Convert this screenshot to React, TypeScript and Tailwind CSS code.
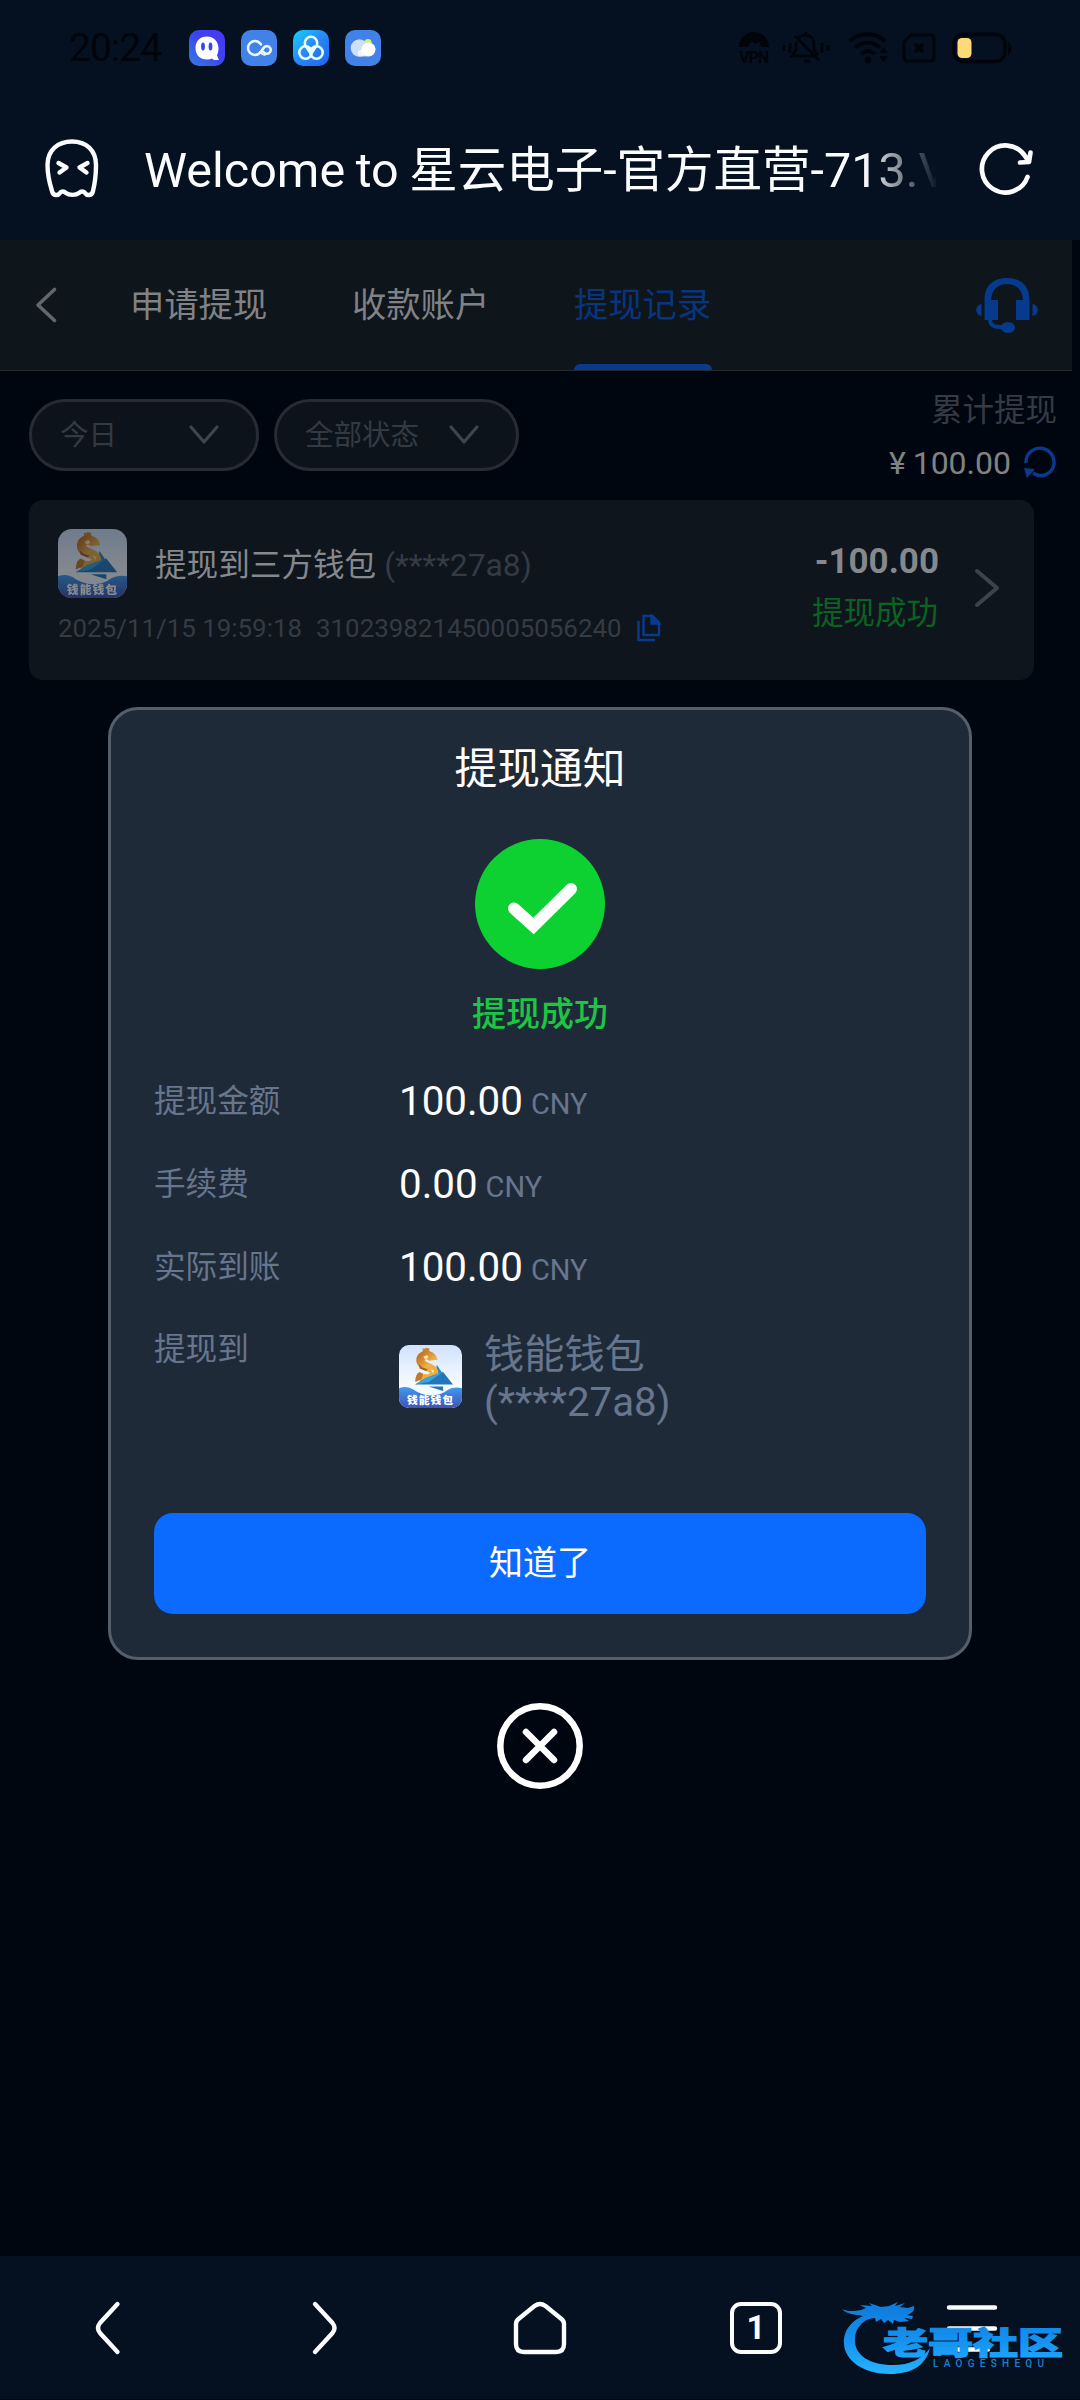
import type { ReactNode } from 'react'

interface DetailRow {
  label: string
  amount: string
}

const TABS = ['申请提现', '收款账户', '提现记录']

const ROWS: DetailRow[] = [
  { label: '提现金额', amount: '100.00' },
  { label: '手续费', amount: '0.00' },
  { label: '实际到账', amount: '100.00' },
]

function WalletLogo({ className }: { className: string }) {
  return (
    <svg viewBox="0 0 70 70" className={className}>
      <defs>
        <linearGradient id="sky" x1="0" y1="0" x2="0" y2="1">
          <stop offset="0" stopColor="#d0e2fc" />
          <stop offset="0.6" stopColor="#f6faff" />
        </linearGradient>
        <linearGradient id="sea" x1="0" y1="0" x2="0" y2="1">
          <stop offset="0" stopColor="#3f9cf0" />
          <stop offset="1" stopColor="#3f52b4" />
        </linearGradient>
        <linearGradient id="gold" gradientUnits="userSpaceOnUse" x1="19" y1="10" x2="46" y2="36">
          <stop offset="0" stopColor="#b9661c" />
          <stop offset="0.5" stopColor="#efb148" />
          <stop offset="1" stopColor="#e8a93c" />
        </linearGradient>
      </defs>
      <rect width="70" height="70" fill="url(#sky)" />
      <path d="M42 22l6 9-8 6z" fill="#2b86cc" />
      <path d="M26 4h3l1-1 4 1-1 5-6 1z" fill="#c78734" />
      <path d="M38 17C37 9 23 9 24 18c1 7 15 6 15 13 0 8-14 8-15 2" fill="none" stroke="url(#gold)" strokeWidth="9.500" />
      <path d="M18 41q0-9 5-11l4 2-2 6z" fill="#c4792b" />
      <path d="M27 13l4-2 2 3-4 2zM35 27l4 1-1 4z" fill="#fbe3a4" />
      <path d="M22 21l4 4 6 2-2 2-7-3z" fill="#a9601f" />
      <path d="M18 44l11-7 20-7 11 14z" fill="#2277bb" />
      <path d="M18 44l15-3 16-11-20 7z" fill="#3ba3dd" />
      <path d="M33 46h16v5z" fill="#2277bb" />
      <path d="M0 48q8-3 15 1 10 7 20 7 12 0 19-6 7-4 16-2v22H0z" fill="url(#sea)" />
      <text x="9" y="66" textLength="51" fill="#ffffff" className="text-[12px] font-black">
        钱能钱包
      </text>
    </svg>
  )
}

function AppBadge({ className, children }: { className: string; children: ReactNode }) {
  return (
    <div className={`size-9 overflow-hidden rounded-[10px] ${className}`}>
      <svg viewBox="0 0 36 36" className="size-9" fill="none">
        {children}
      </svg>
    </div>
  )
}

function StatusBar() {
  return (
    <div className="flex h-[96px] items-center pl-[69px] pr-[66px]">
      <span className="w-[120px] text-[39px] leading-[96px] tracking-[-1px] text-[#01040b]">20:24</span>
      <div className="flex gap-4">
        <AppBadge className="bg-linear-to-tr from-[#3a7be0] via-[#3b45f0] to-[#4a35f5]">
          <path d="M18 6.500c7 0 11.500 5 11.500 12 0 3-.6 5-1.600 6.800L30 30h-5l-2-1.500c-1.600.8-3.200 1-5 1-7 0-11.500-4.500-11.500-11.500S11 6.500 18 6.500z" fill="#fff" />
          <ellipse cx="14" cy="16.500" rx="1.900" ry="4" fill="#3b45e8" />
          <ellipse cx="21.500" cy="16.500" rx="1.900" ry="4" fill="#3b45e8" />
        </AppBadge>
        <AppBadge className="bg-[#4281e8]">
          <path d="M20 14.500c-1.500-2.300-3.500-3.500-6-3.500a7 7 0 0 0 0 14c4 0 6-3 7.500-5.500S24 16 26 16a3.900 3.900 0 1 1-3.500 6" stroke="#e9fbff" strokeWidth="2.500" strokeLinecap="round" />
          <path d="M19 21c1 2.500 3 4 5.500 4" stroke="#e9fbff" strokeWidth="2" />
        </AppBadge>
        <AppBadge className="bg-linear-to-br from-[#12cfff] via-[#2a86f5] to-[#1f63f0]">
          <g stroke="#eaffff" strokeWidth="2.600">
            <circle cx="18" cy="13" r="6.200" />
            <circle cx="12.500" cy="22.500" r="6.200" />
            <circle cx="23.500" cy="22.500" r="6.200" />
            <path d="M14 18l4 6 4-6" />
          </g>
        </AppBadge>
        <AppBadge className="bg-[#4281e8]">
          <circle cx="23" cy="12.500" r="3.600" fill="#d9f06a" />
          <circle cx="14.500" cy="18" r="8.800" fill="#cfdff8" />
          <circle cx="23.500" cy="19.500" r="7" fill="#fff" />
          <rect x="13" y="20" width="11" height="6.500" rx="3" fill="#fff" fillOpacity="0.700" />
        </AppBadge>
      </div>

      <svg viewBox="0 0 276 36" className="ml-auto h-9 w-[276px]" fill="none" stroke="#01040b">
        {/* vpn */}
        <path d="M2 17a14 14 0 0 1 28 0h-6l-3-5-4 2-3-3-5 6z" fill="#01040b" stroke="none" />
        <path d="M2 17a14 14 0 0 1 28 0" strokeWidth="2" />
        <text x="1" y="32.500" textLength="30" fill="#01040b" stroke="none" className="text-[16px] font-bold">
          VPN
        </text>
        {/* muted bell */}
        <g strokeWidth="2.800">
          <path d="M61 8c2-3 4-3 7-3 5 1 8 4 8 9v6l4 5M58 12v8l-4 6h22M57 6l24 24M66 31h6M68 2v3" />
          <path d="M52 13v10M46 15v6M84 13v10M90 15v6" />
        </g>
        {/* wifi */}
        <g strokeWidth="4">
          <path d="M112 11c10-9 25-9 35 0M117 17.500c8-6.500 17-6.500 25 0M123 24c5-4 9-4 14 0" />
        </g>
        <circle cx="130" cy="30" r="3.200" fill="#01040b" stroke="none" />
        <path d="M141 23l4.500-6 4.500 6zM141 26l4.500 6 4.500-6z" fill="#01040b" stroke="none" />
        {/* no sim */}
        <path d="M173 5h20a3 3 0 0 1 3 3v20a3 3 0 0 1-3 3h-24a3 3 0 0 1-3-3V12z" strokeWidth="3" />
        <path d="M177 14l8 8M185 14l-8 8" strokeWidth="3.400" />
        {/* battery */}
        <rect x="216" y="4.500" width="51" height="27" rx="9" strokeWidth="3.400" />
        <path d="M271 14q3 4 0 9z" fill="#01040b" strokeWidth="2" />
        <rect x="219.500" y="8" width="14" height="20" rx="4.500" fill="#ffd978" stroke="none" />
      </svg>
    </div>
  )
}

function BrowserBar() {
  return (
    <div className="flex h-[144px] items-center pl-[44px] pr-[46px]">
      <svg viewBox="0 0 56 60" className="h-[60px] w-14" fill="none" stroke="#fbfdff" strokeWidth="4.400" strokeLinecap="round" strokeLinejoin="round">
        <path d="M3.500 27C3.500 12 14 3.500 28 3.500S52 12 52 27c0 9-1 18-3 26-1 5-6 5-8 2-1-2-4-2-6 0-3 2.500-10 2.500-13 0-2-2-5-2-6 0-2 3-7 3-8-2-2.500-8-4.500-17-4.500-26z" />
        <path d="M14.500 25l8 4.500-7 5M43.500 25l-8 4.500 7 5" />
      </svg>
      <div className="ml-[44px] w-[792px] overflow-hidden whitespace-nowrap pt-[5px] text-[48.500px] leading-[72px] text-[#fbfdff] [word-spacing:-1.500px] [mask-image:linear-gradient(to_right,black_720px,transparent_795px)]">
        Welcome to 星云电子-官方直营-713.V
      </div>
      <svg viewBox="0 0 56 56" className="ml-auto size-14" fill="none" stroke="#fbfdff" strokeWidth="4.700" strokeLinecap="round" strokeLinejoin="round">
        <path d="M49.500 37A23.500 23.500 0 1 1 47 16l3 4" />
        <path d="M52.500 12.500l-1.500 9.500-9 .5" />
      </svg>
    </div>
  )
}

function TabBar() {
  return (
    <div className="flex h-[131px] w-[1072px] items-center border-b border-[#262a2e] bg-[#0e151b] pr-[33px]">
      <svg viewBox="0 0 24 38" className="ml-[34px] h-[38px] w-6" fill="none" stroke="#62666d" strokeWidth="3.600" strokeLinecap="round" strokeLinejoin="round">
        <path d="M20.500 3.500L4 19l16.500 15.500" />
      </svg>
      <div className="ml-[72px] flex h-full gap-[84px]">
        {TABS.map((tab, i) => {
          const active = i === TABS.length - 1
          return (
            <div key={tab} className="flex h-full w-[138px] flex-col justify-between whitespace-nowrap">
              <span className={`text-[34.300px] leading-[130px] ${active ? 'h-[124px] text-[#08357f]' : 'text-[#808386]'}`}>
                {tab}
              </span>
              {active && <div className="h-1.5 w-full rounded-t-md bg-[#0a3a8a]" />}
            </div>
          )
        })}
      </div>
      <svg viewBox="0 0 64 58" className="ml-auto h-[58px] w-16" fill="#053a8c">
        <path d="M9.500 24C9.500 9 19 2 32 2s22.500 7 22.500 22v20H41V24h7C47 13 41 8 32 8s-15 5-16 16h7v20H9.500z" />
        <path d="M6.500 28v12C-.5 39-.5 29 6.500 28zM57.500 28v12c7-1 7-11 0-12z" />
        <path d="M15 43c0 6 3 8 9 8h6" fill="none" stroke="#053a8c" strokeWidth="4" />
        <ellipse cx="33" cy="51.500" rx="7" ry="5.500" />
      </svg>
    </div>
  )
}

function FilterPill({ label, className }: { label: string; className: string }) {
  return (
    <div className={`flex h-[72px] items-center justify-between rounded-full border-3 border-[#262b34] bg-[#0d131b] pl-[28px] ${className}`}>
      <span className="pt-[2px] text-[28.500px] leading-[62px] text-[#333a43]">{label}</span>
      <svg viewBox="0 0 34 24" className="h-6 w-[34px]" fill="none" stroke="#3f454e" strokeWidth="3.200" strokeLinecap="round" strokeLinejoin="round">
        <path d="M4 4l13 15L30 4" />
      </svg>
    </div>
  )
}

function RecordCard() {
  return (
    <div className="ml-[29px] mt-[21px] flex h-[180px] w-[1005px] rounded-[14px] bg-[#0e151c] pl-[29px] pr-[33px]">
      <div className="flex flex-col pt-[29px]">
        <div className="flex items-center">
          <WalletLogo className="size-[69px] rounded-[14px] opacity-50" />
          <span className="ml-7 pt-[4px] text-[31.600px] leading-[65px] text-[#85888c]">提现到三方钱包</span>
          <span className="ml-[8px] pt-[4px] text-[31.800px] leading-[65px] text-[#343b44]">(****27a8)</span>
        </div>
        <div className="mt-3 flex items-center text-[25.900px] leading-9 text-[#343b44]">
          <span className="w-[258px]">2025/11/15 19:59:18</span>
          <span className="w-[306px]">310239821450005056240</span>
          <svg viewBox="0 0 24 28" className="ml-[15px] h-7 w-6" fill="none" stroke="#0a3a90" strokeWidth="2.400">
            <path d="M6.500 2h9L22 8.500V21H6.500zM1.500 7v19H18" />
            <path d="M14.500 2v7.500H22z" fill="#0a3a90" />
          </svg>
        </div>
      </div>
      <div className="ml-auto flex flex-col items-end pt-[38px]">
        <span className="text-[35px] font-bold leading-[48px] text-[#85888c]">-100.00</span>
        <span className="mr-px mt-[4px] text-[31.500px] leading-[48px] text-[#0b6222]">提现成功</span>
      </div>
      <svg viewBox="0 0 28 42" className="ml-[34px] mt-[67px] h-[42px] w-7" fill="none" stroke="#3d434c" strokeWidth="4" strokeLinecap="round" strokeLinejoin="round">
        <path d="M4 4l20 17L4 38" />
      </svg>
    </div>
  )
}

function Notice() {
  return (
    <div className="flex h-[953px] w-[864px] flex-col items-center rounded-[30px] border-3 border-[#555e6b] bg-[#1f2a38] px-[43px]">
      <h2 className="mt-[28px] text-[42.800px] leading-[62px] text-white">提现通知</h2>
      <svg viewBox="0 0 130 130" className="mt-[39px] size-[130px]" fill="none">
        <circle cx="65" cy="65" r="65" fill="#0dd131" />
        <path d="M39 69.500L58.500 87 96 50" stroke="#fff" strokeWidth="12" strokeLinecap="round" />
      </svg>
      <p className="mt-[20px] text-[34px] font-medium leading-[50px] text-[#1dc544]">提现成功</p>
      <div className="mt-[21px] flex w-full flex-col">
        {ROWS.map(({ label, amount }) => (
          <div key={label} className="flex h-[83px] items-center">
            <span className="w-[245px] text-[31.600px] text-[#67758d]">{label}</span>
            <span className="pt-[2px] text-[40.300px] text-white">{amount}</span>
            <span className="ml-[8px] pt-1.5 text-[29px] text-[#67758d]">CNY</span>
          </div>
        ))}
        <div className="flex">
          <span className="w-[245px] pt-[18px] text-[31.600px] leading-[46px] text-[#67758d]">提现到</span>
          <WalletLogo className="mt-[36px] size-[63px] rounded-[10px]" />
          <div className="ml-[22px] mt-[22px] text-[40.200px] leading-12 text-[#67758d]">
            <div>钱能钱包</div>
            <div>(****27a8)</div>
          </div>
        </div>
      </div>
      <button className="mb-[43px] mt-auto h-[101px] w-full rounded-[19px] bg-[#0b6aff] text-[34px] text-white">知道了</button>
    </div>
  )
}

function BottomNav() {
  return (
    <div className="relative flex h-36 items-center border-b border-[#01050c] bg-[#051120]">
      <div className="grid w-full grid-cols-5 justify-items-center">
        <svg viewBox="0 0 60 60" className="size-[60px]" fill="none" stroke="#fbfdff" strokeWidth="4.400" strokeLinecap="round">
          <path d="M39.500 6L22 25q-4 5 0 10l17.500 19" />
        </svg>
        <svg viewBox="0 0 60 60" className="size-[60px]" fill="none" stroke="#fbfdff" strokeWidth="4.400" strokeLinecap="round">
          <path d="M21 6l17.500 19q4 5 0 10L21 54" />
        </svg>
        <svg viewBox="0 0 60 60" className="size-[60px]" fill="none" stroke="#fbfdff" strokeWidth="4.400" strokeLinejoin="round">
          <path d="M8.500 21L24.500 8q5.500-4 11 0L51.500 21q2.500 2 2.500 5v20q0 8-8 8H14q-8 0-8-8v-20q0-3 2.500-5z" />
        </svg>
        <div className="flex size-[60px] items-center justify-center">
          <div className="flex size-[52px] items-center justify-center rounded-[11px] border-4 border-[#fbfdff] text-[33px] font-bold leading-none text-[#fbfdff]">
            1
          </div>
        </div>
        <svg viewBox="0 0 60 60" className="size-[60px]" stroke="#fbfdff" strokeWidth="4.400" strokeLinecap="round">
          <path d="M7 9.500h46M7 30.500h46M14 51.500h32" />
        </svg>
      </div>

      {/* site watermark floats over the nav */}
      <svg viewBox="840 2296 228 82" className="absolute left-[840px] top-10 h-[82px] w-[228px]">
        <defs>
          <linearGradient id="mark" gradientUnits="userSpaceOnUse" x1="0" y1="2300" x2="0" y2="2375">
            <stop offset="0" stopColor="#0f78d8" />
            <stop offset="0.550" stopColor="#1592f0" />
            <stop offset="1" stopColor="#27b4ff" />
          </linearGradient>
        </defs>
        <g fill="url(#mark)">
          <path d="M872 2313c-20 5-29 17-28 31 1 17 20 30 46 30 22 0 36-9 40-26-8 11-20 17-37 17-24 0-37-10-38-23-1-12 6-22 20-25z" />
          <path d="M842 2309c6 3 13 2 19 1l5-2-6-3 12 1-3-3 12 4 8-1 9-4-3 4 10-3-5 4 8 1 6-2c1 4-1 7-7 9l6 1-1 3-8-1 5 3-9 1-6-2-1 4-5-4-4 3-3-4-5 3-1-4-7 1-5-3c-8-2-16-1-21-7z" />
          <text x="883" y="2353.500" textLength="180" lengthAdjust="spacingAndGlyphs" className="text-[31px] font-black" stroke="url(#mark)" strokeWidth="1.200">
            老哥社区
          </text>
          <text x="933" y="2366.500" textLength="111" lengthAdjust="spacing" fill="#1b80cc" className="text-[10px] font-medium">
            LAOGESHEQU
          </text>
        </g>
      </svg>
    </div>
  )
}

export default function App() {
  return (
    <div className="flex h-[2400px] w-[1080px] flex-col overflow-hidden bg-[#00060f] font-[Roboto,'Noto_Sans_CJK_SC',sans-serif]">
      <header className="h-60 shrink-0 bg-[#051120]">
        <StatusBar />
        <BrowserBar />
      </header>

      <main className="relative flex-1">
        <TabBar />
        <div className="flex h-[108px] items-start pl-[29px] pr-[23px] pt-7">
          <div className="flex gap-[15px]">
            <FilterPill label="今日" className="w-[230px] pr-[35px]" />
            <FilterPill label="全部状态" className="w-[245px] pr-[35px]" />
          </div>
          <div className="-mt-3 ml-auto flex flex-col items-end">
            <span className="text-[31.500px] leading-[48px] text-[#343b44]">累计提现</span>
            <div className="flex items-center">
              <span className="text-[32px] leading-[56px] text-[#808386] [word-spacing:-1px]">¥ 100.00</span>
              <svg viewBox="0 0 34 34" className="-mt-1 ml-[12px] size-[34px]" fill="none" stroke="#0a3a90" strokeWidth="3.400">
                <path d="M3 19a14 14 0 1 1 24 9q-8 7-17 1" />
                <path d="M1 24l11 1-8 9z" fill="#0a3a90" stroke="none" />
              </svg>
            </div>
          </div>
        </div>
        <RecordCard />

        {/* dialog over the dimmed page */}
        <div className="absolute inset-x-0 top-[467px] flex flex-col items-center">
          <Notice />
          <svg viewBox="0 0 86 86" className="mt-[43px] size-[86px]" fill="none" stroke="#fff" strokeWidth="6.500" strokeLinecap="round">
            <circle cx="43" cy="43" r="39.700" />
            <path d="M29 29l28 28M57 29L29 57" />
          </svg>
        </div>
      </main>

      <BottomNav />
    </div>
  )
}
